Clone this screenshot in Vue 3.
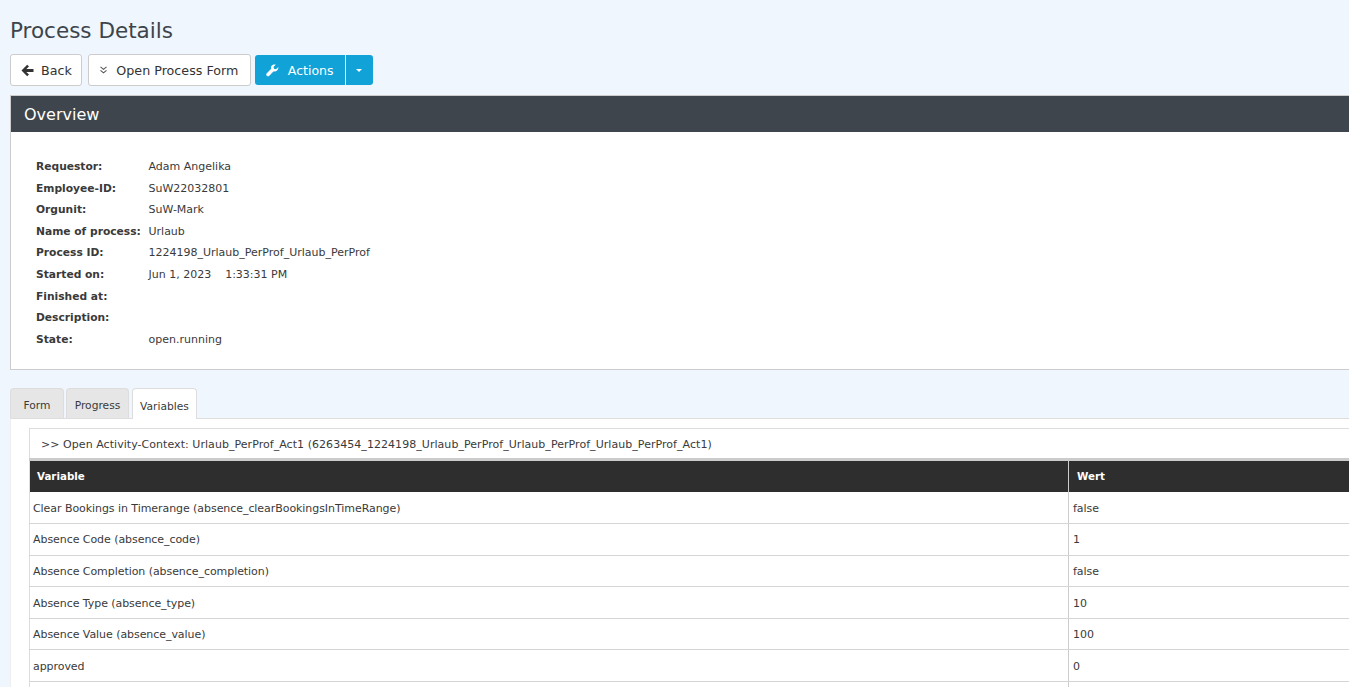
<script setup>
const details = [
  ['Requestor:', 'Adam Angelika'],
  ['Employee-ID:', 'SuW22032801'],
  ['Orgunit:', 'SuW-Mark'],
  ['Name of process:', 'Urlaub'],
  ['Process ID:', '1224198_Urlaub_PerProf_Urlaub_PerProf'],
  ['Started on:', 'Jun 1, 2023\u00a0\u00a0\u00a0\u00a01:33:31 PM'],
  ['Finished at:', ''],
  ['Description:', ''],
  ['State:', 'open.running']
];

const rows = [
  ['Clear Bookings in Timerange (absence_clearBookingsInTimeRange)', 'false'],
  ['Absence Code (absence_code)', '1'],
  ['Absence Completion (absence_completion)', 'false'],
  ['Absence Type (absence_type)', '10'],
  ['Absence Value (absence_value)', '100'],
  ['approved', '0'],
  ['', '']
];
</script>

<template>
  <div class="page">
    <h1 class="title">Process Details</h1>

    <div class="toolbar">
      <button class="btn back">
        <svg class="ico" width="13" height="13" viewBox="0 0 13 13"><path d="M6.2.8 8 2.600 5.300 5.100H12.500V7.900H5.300L8 10.400 6.200 12.200 .5 6.500Z" fill="#333" /></svg>
        Back
      </button>
      <button class="btn open">
        <svg class="ico small" width="7" height="8" viewBox="0 0 7 8"><path d="M.5 .8 3.500 3.300 6.500 .8M.5 4.300 3.500 6.800 6.500 4.300" fill="none" stroke="#555" stroke-width="1.100" /></svg>
        Open Process Form
      </button>
      <div class="split">
        <button class="btn-primary main">
          <svg class="ico" width="13" height="13" viewBox="0 0 13 13"><path d="M12.300 3.100 10 5.300 8 4.800 7.500 2.900 9.800 .6C8.300 .1 6.700 .5 5.800 1.600 5 2.500 4.800 3.700 5.200 4.800L.8 9.200C.1 9.900 .1 11 .8 11.700 1.500 12.400 2.600 12.400 3.300 11.700L7.700 7.300C8.800 7.700 10.100 7.500 11 6.600 12 5.700 12.600 4.400 12.300 3.100Z" fill="#fff" /></svg>
          Actions
        </button>
        <button class="btn-primary caret"><span class="tri"></span></button>
      </div>
    </div>

    <section class="panel">
      <div class="panel-head">Overview</div>
      <div class="panel-body">
        <div v-for="d in details" :key="d[0]" class="detail">
          <span class="label">{{ d[0] }}</span>
          <span>{{ d[1] }}</span>
        </div>
      </div>
    </section>

    <div class="tabs">
      <div class="tab form">Form</div>
      <div class="tab progress">Progress</div>
      <div class="tab active">Variables</div>
    </div>

    <div class="tab-content">
      <div class="context">&gt;&gt; Open Activity-Context: Urlaub_PerProf_Act1 (6263454_1224198_Urlaub_PerProf_Urlaub_PerProf_Urlaub_PerProf_Act1)</div>
      <table class="vars">
        <thead>
          <tr>
            <th class="col-a">Variable</th>
            <th>Wert</th>
          </tr>
        </thead>
        <tbody>
          <tr v-for="(r, i) in rows" :key="i">
            <td class="col-a">{{ r[0] }}</td>
            <td>{{ r[1] }}</td>
          </tr>
        </tbody>
      </table>
    </div>
  </div>
</template>

<style>
html, body {
  margin: 0;
  height: 100%;
  overflow: hidden;
  background: #eff6fe;
}
</style>

<style scoped>
.page {
  width: 1700px;
  padding: 0 10px;
  font-family: "DejaVu Sans", Verdana, sans-serif;
  font-size: 11px;
  color: #3a3a3a;
}

.title {
  margin: 0;
  padding-top: 17px;
  font-size: 21.500px;
  font-weight: 400;
  line-height: 27px;
  color: #3d444b;
}

.toolbar {
  display: flex;
  align-items: center;
  margin-top: 10px;
}

.btn {
  display: flex;
  align-items: center;
  height: 32px;
  border: 1px solid #ccc;
  border-radius: 3px;
  background: #fff;
  color: #333;
  font: 12.700px "DejaVu Sans", Verdana, sans-serif;
}

.back {
  margin-right: 6px;
  padding: 0 9px 0 10px;
}

.open {
  margin-right: 4px;
  padding: 0 11.500px;
}

.ico {
  margin-right: 7px;
}

.ico.small {
  margin-right: 9px;
}

.split {
  display: flex;
}

.btn-primary {
  display: flex;
  align-items: center;
  height: 30px;
  border: 0;
  background: #11a2d8;
  color: #fff;
  font: 12.500px "DejaVu Sans", Verdana, sans-serif;
}

.main {
  width: 90px;
  padding: 0 0 0 11px;
  border-radius: 3px 0 0 3px;
}

.main .ico {
  margin-right: 9px;
}

.caret {
  justify-content: center;
  width: 27px;
  margin-left: 1px;
  padding: 0;
  border-radius: 0 3px 3px 0;
}

.tri {
  border-top: 3px solid #fff;
  border-left: 3px solid transparent;
  border-right: 3px solid transparent;
}

.panel {
  margin-top: 9px;
  border: 1px solid #ccc;
  background: #fff;
}

.panel-head {
  height: 36px;
  padding-left: 13px;
  background: #3e454c;
  color: #fff;
  font-size: 16px;
  line-height: 38px;
}

.panel-body {
  padding: 24px 25px 18.600px;
  line-height: 21.600px;
}

.detail {
  display: flex;
  height: 21.600px;
}

.label {
  width: 112.500px;
  font-size: 10.700px;
  font-weight: 700;
}

.tabs {
  display: flex;
  gap: 3px;
  margin-top: 18px;
  height: 30px;
}

.tab {
  height: 30px;
  width: 65px;
  border: 1px solid #ddd;
  border-bottom: 0;
  border-radius: 4px 4px 0 0;
  background: #e6e6e6;
  line-height: 33px;
  text-align: center;
  font-size: 10.700px;
  box-sizing: border-box;
}

.tab.form {
  width: 54px;
  margin-right: -1px;
}

.tab.progress {
  width: 63px;
}

.tab.active {
  height: 31px;
  background: #fff;
  line-height: 35px;
  position: relative;
}

.tab-content {
  padding: 9px 18px 0;
  border-top: 1px solid #ddd;
  border-left: 1px solid #eee;
  background: #fff;
  height: 300px;
}

.context {
  height: 29px;
  padding-left: 11px;
  border: 1px solid #ddd;
  border-bottom: 0;
  line-height: 31px;
  letter-spacing: 0.050px;
}

.vars {
  width: 100%;
  border-collapse: collapse;
  table-layout: fixed;
  border-top: 3px solid #ccc;
  border-left: 1px solid #ddd;
}

.vars th {
  height: 29.400px;
  padding: 0 8px 2px;
  background: #2e2e2e;
  color: #fff;
  text-align: left;
  font-size: 10.300px;
  font-weight: 700;
  border-left: 1px solid #ccc;
}

.vars th.col-a {
  width: 1023px;
  padding-left: 7px;
  border-left: 0;
}

.vars td {
  height: 29.100px;
  padding: 1.500px 4px 0;
  border-bottom: 1px solid #d5d5d5;
  border-left: 1px solid #ccc;
  letter-spacing: -0.060px;
}

.vars td.col-a {
  padding-left: 3px;
  border-left: 0;
}
</style>
